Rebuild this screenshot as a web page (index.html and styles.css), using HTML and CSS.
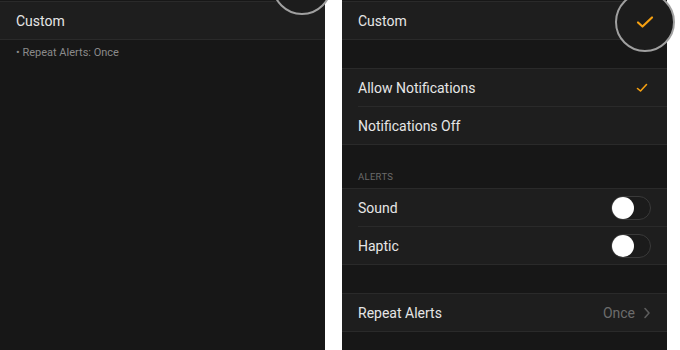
FILE: index.html
```html
<!DOCTYPE html>
<html lang="en">
<head>
    <meta charset="UTF-8">
    <title>Notification Settings</title>
    <link rel="stylesheet" href="styles.css">
</head>
<body>
    <div class="screens">
        <div class="screen">
            <div class="group group-top">
                <div class="row">
                    <span class="label">Custom</span>
                </div>
            </div>
            <p class="summary">&bull; Repeat Alerts: Once</p>
            <div class="lens lens-left"></div>
        </div>

        <div class="screen">
            <div class="group group-top">
                <div class="row">
                    <span class="label">Custom</span>
                </div>
            </div>
            <div class="lens lens-right">
                <svg width="18" height="14" viewBox="0 0 18 14"><path d="M2 7.5 L6.5 11.5 L16 2.5" fill="none" stroke="#f5a011" stroke-width="2.2" stroke-linecap="round" stroke-linejoin="round"/></svg>
            </div>

            <div class="group">
                <div class="row">
                    <span class="label">Allow Notifications</span>
                    <svg class="check" width="12" height="10" viewBox="0 0 12 10"><path d="M1.5 5.5 L4.5 8 L10.5 1.5" fill="none" stroke="#f5a011" stroke-width="1.6" stroke-linecap="round" stroke-linejoin="round"/></svg>
                </div>
                <div class="row">
                    <span class="label">Notifications Off</span>
                </div>
            </div>

            <div class="section-title">ALERTS</div>
            <div class="group group-tight">
                <div class="row">
                    <span class="label">Sound</span>
                    <span class="toggle"><span class="knob"></span></span>
                </div>
                <div class="row">
                    <span class="label">Haptic</span>
                    <span class="toggle"><span class="knob"></span></span>
                </div>
            </div>

            <div class="group">
                <div class="row">
                    <span class="label">Repeat Alerts</span>
                    <span class="value">Once
                        <svg width="8" height="12" viewBox="0 0 8 12"><path d="M2 1.5 L6 6 L2 10.5" fill="none" stroke="#5c5c5c" stroke-width="1.6" stroke-linecap="round" stroke-linejoin="round"/></svg>
                    </span>
                </div>
            </div>
        </div>
    </div>
</body>
</html>
```

FILE: styles.css
```css
body {
    margin: 0;
    background: #ffffff;
    font-family: 'Roboto', 'Inter', sans-serif;
    overflow: hidden;
}
.screens {
    display: flex;
    gap: 17px;
    height: 350px;
}
.screen {
    position: relative;
    width: 325px;
    height: 350px;
    background: #171717;
}
.group {
    margin-top: 28px;
    background: #1e1e1e;
    border-top: 1px solid #2a2a2a;
    border-bottom: 1px solid #2a2a2a;
}
.group-top {
    margin-top: 1px;
}
.group-tight {
    margin-top: 5px;
}
.row {
    display: flex;
    align-items: center;
    justify-content: space-between;
    height: 37px;
    margin-left: 16px;
    padding-right: 16px;
}
.row + .row {
    border-top: 1px solid #2a2a2a;
}
.label {
    font-size: 14px;
    color: #e6e6e6;
}
.check {
    margin-right: 3px;
}
.summary {
    margin: 6px 0 0 16px;
    font-size: 11px;
    color: #8a8a8a;
}
.section-title {
    margin: 26px 0 0 16px;
    height: 12px;
    line-height: 12px;
    font-size: 9.5px;
    letter-spacing: 0.3px;
    color: #6a6a6a;
}
.toggle {
    position: relative;
    width: 38px;
    height: 22px;
    border: 1px solid #3a3a3a;
    border-radius: 12px;
    background: #1b1b1b;
}
.knob {
    position: absolute;
    left: 0;
    top: 0;
    width: 22px;
    height: 22px;
    border-radius: 50%;
    background: #ffffff;
}
.value {
    display: flex;
    align-items: center;
    gap: 8px;
    font-size: 14px;
    color: #6c6c6c;
}
.lens {
    position: absolute;
    width: 56px;
    height: 56px;
    border: 2px solid #a0a0a0;
    border-radius: 50%;
    background: #1c1c1c;
    display: flex;
    align-items: center;
    justify-content: center;
}
.lens-left {
    left: 272px;
    top: -45px;
}
.lens-right {
    left: 273px;
    top: -8px;
}
```
